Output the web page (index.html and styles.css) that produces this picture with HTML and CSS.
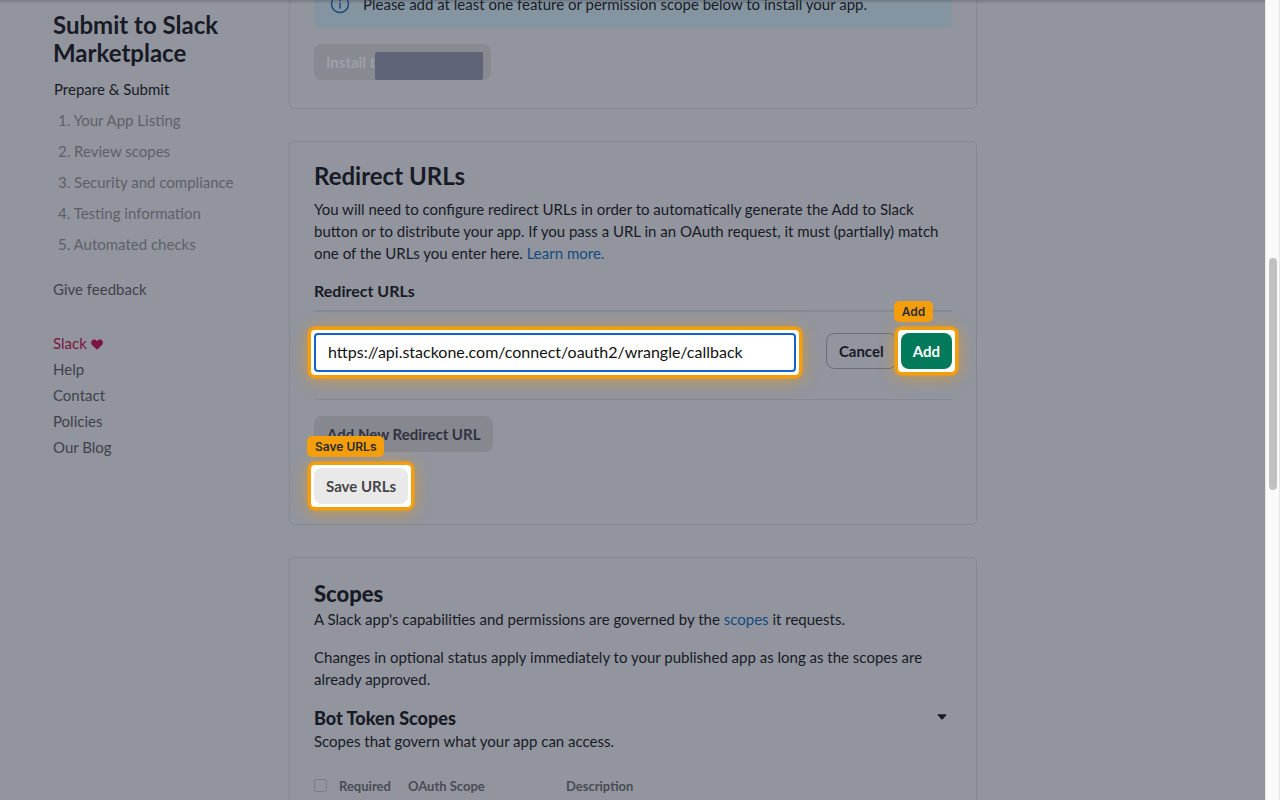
FILE: index.html
```html
<!DOCTYPE html>
<html lang="en">
<head>
<meta charset="utf-8">
<title>OAuth &amp; Permissions</title>
<link rel="stylesheet" href="styles.css">
</head>
<body>
<div class="page">
  <nav class="sidebar">
    <h2 class="sidebar-title">Submit to Slack Marketplace</h2>
    <a class="step-current" href="#">Prepare &amp; Submit</a>
    <ol class="steps">
      <li>1. Your App Listing</li>
      <li>2. Review scopes</li>
      <li>3. Security and compliance</li>
      <li>4. Testing information</li>
      <li>5. Automated checks</li>
    </ol>
    <a class="feedback" href="#">Give feedback</a>
    <ul class="links">
      <li><a class="brand" href="#">Slack <svg class="heart" viewBox="0 0 12 11" aria-hidden="true"><path d="M6 10.8 1 5.9C-.2 4.600-.1 2.300 1.100 1.200 2.500 0 4.800.2 6 2.200 7.200.2 9.500 0 10.900 1.200c1.200 1.100 1.300 3.400.1 4.700z"/></svg></a></li>
      <li><a href="#">Help</a></li>
      <li><a href="#">Contact</a></li>
      <li><a href="#">Policies</a></li>
      <li><a href="#">Our Blog</a></li>
    </ul>
  </nav>
  <main class="content">
    <section class="card card-install">
      <div class="alert">
        <svg class="info" viewBox="0 0 20 20" aria-hidden="true"><circle cx="10" cy="10" r="8.500"/><path d="M10 9v5"/><circle class="dot" cx="10" cy="6.300" r="1"/></svg>
        <span>Please add at least one feature or permission scope below to install your app.</span>
      </div>
      <button class="btn btn-disabled" disabled>Install t<span class="redaction"></span></button>
    </section>

    <section class="card card-urls">
      <h2 class="title">Redirect URLs</h2>
      <p class="text">You will need to configure redirect URLs in order to automatically generate the Add to Slack button or to distribute your app. If you pass a URL in an OAuth request, it must (partially) match one of the URLs you enter here. <a class="link" href="#">Learn more.</a></p>
      <label class="list-head" for="url">Redirect URLs</label>
      <div class="url-row">
        <div class="spot spot-input"><input class="url" id="url" type="text" value="https://api.stackone.com/connect/oauth2/wrangle/callback"></div>
        <div class="row-actions">
          <button class="btn btn-outline">Cancel</button>
          <div class="spot"><span class="tag">Add</span><button class="btn btn-primary">Add</button></div>
        </div>
      </div>
      <div class="stack">
        <button class="btn btn-muted">Add New Redirect URL</button>
        <div class="spot"><span class="tag">Save URLs</span><button class="btn btn-save">Save URLs</button></div>
      </div>
    </section>

    <section class="card card-scopes">
      <h2 class="title-heavy">Scopes</h2>
      <p class="text">A Slack app's capabilities and permissions are governed by the <a class="link" href="#">scopes</a> it requests.</p>
      <p class="text text-spaced">Changes in optional status apply immediately to your published app as long as the scopes are already approved.</p>
      <div class="subhead">
        <h3 class="subtitle">Bot Token Scopes</h3>
        <button class="toggle" aria-label="Collapse"><svg viewBox="0 0 10 6"><path d="M1.200.3h7.600q1 .2.4 1L5.700 5.300q-.7.700-1.400 0L.8 1.300Q.2.500 1.200.3z"/></svg></button>
      </div>
      <p class="text">Scopes that govern what your app can access.</p>
      <table class="scopes">
        <tr>
          <th class="col-required"><label class="check"><input type="checkbox">Required</label></th>
          <th class="col-scope">OAuth Scope</th>
          <th>Description</th>
        </tr>
      </table>
    </section>
  </main>
</div>
<div class="scroll-track"><div class="scroll-thumb"></div></div>
</body>
</html>
```
FILE: styles.css
```css
* { box-sizing: border-box; }
body {
  margin: 0;
  height: 100vh;
  display: flex;
  overflow: hidden;
  background: #92959e;
  color: #181b25;
  font: 15px/22px Lato, "Liberation Sans", sans-serif;
}
h2, h3, p, ol, ul { margin: 0; padding: 0; }
ol, ul { list-style: none; }
a { color: inherit; text-decoration: none; }
button, input { font: inherit; color: inherit; }

.page {
  flex: 1;
  min-width: 0;
  height: 100vh;
  overflow: hidden;
  display: grid;
  grid-template-columns: 204px minmax(0, 688px);
  column-gap: 32px;
  padding-left: 53px;
  position: relative;
}
.page::before {
  content: "";
  position: absolute;
  inset: 0 0 auto;
  height: 4px;
  z-index: 2;
  background: linear-gradient(rgba(70, 72, 82, .35), rgba(70, 72, 82, 0));
}

.sidebar { padding-top: 11px; color: #3f424c; }
.sidebar-title { font-size: 24px; line-height: 28px; font-weight: 700; color: #181b25; }
.step-current { display: block; margin-top: 7px; padding-left: 1px; line-height: 31px; color: #181b25; }
.steps { padding-left: 5px; line-height: 31px; color: #5e6069; }
.feedback { display: block; margin-top: 18px; }
.links { margin-top: 30px; line-height: 26px; }
.brand { color: #79153f; }
.heart { width: 12px; height: 11px; vertical-align: -1px; fill: currentColor; }

.content { display: flex; flex-direction: column; gap: 32px; }
.card { flex: none; border: 1px solid #858891; border-radius: 5px; padding: 0 24px; }

.card-install { margin-top: -42px; padding-top: 24px; padding-bottom: 28px; }
.alert { display: flex; gap: 13px; padding: 10px 16px 13px; border-radius: 8px; background: #8494a0; margin-bottom: 16px; }
.info { width: 20px; height: 20px; margin-top: 1px; fill: none; stroke: #1b4c7d; stroke-width: 1.500; stroke-linecap: round; }
.info .dot { fill: #1b4c7d; stroke: none; }

.btn { height: 36px; padding: 0 12px; border: 0; border-radius: 8px; font-weight: 700; white-space: nowrap; }
.btn-disabled { position: relative; display: block; min-width: 177px; text-align: left; background: #888a92; color: #9da0a9; }
.redaction { position: absolute; left: 61px; top: 8px; width: 108px; height: 28px; border-radius: 2px; background: #5e6377; }
.btn-outline { border: 1px solid #6b6e77; background: none; }
.btn-primary { display: block; background: #007a5a; color: #fff; }
.btn-muted { padding: 0 13px; background: #868890; color: #303340; }
.btn-save { display: block; background: #e9e9e9; color: #454547; }

.card-urls { padding-top: 19px; padding-bottom: 20px; }
.title { font-size: 24px; line-height: 30px; font-weight: 700; }
.text { margin-top: 7px; }
.link { color: #134b80; }
.list-head { display: block; margin-top: 16px; padding-bottom: 8px; border-bottom: 2px solid #868992; font-size: 16px; font-weight: 700; }
.url-row { display: flex; justify-content: space-between; gap: 30px; padding: 21px 0 27px; border-bottom: 1px solid #858891; }
.row-actions { display: flex; align-items: flex-start; gap: 4px; }
.stack { display: flex; flex-direction: column; align-items: flex-start; gap: 16px; padding-top: 16px; }

/* Highlight frame that surrounds the control being pointed at */
.spot {
  position: relative;
  margin: -6px;
  padding: 3px;
  border: 3px solid #f59e0b;
  border-radius: 7px;
  background: #fff;
  box-shadow: 0 0 0 1px rgba(245, 158, 11, .5), 0 2px 16px rgba(245, 158, 11, .6);
}
.spot-input { flex: 1; }
.tag {
  position: absolute;
  left: -4px;
  bottom: 100%;
  margin-bottom: 8px;
  padding: 0 8px;
  border-radius: 5px;
  background: #f59e0b;
  color: #2a2c33;
  font: 600 12px/21px Inter, "Liberation Sans", sans-serif;
  white-space: nowrap;
}
.url { display: block; width: 100%; height: 39px; padding: 0 12px 2px; border: 2px solid #1264c8; border-radius: 4px; background: #fff; color: #111; font-size: 16px; outline: 0; }

.card-scopes { padding-top: 21px; padding-bottom: 24px; }
.title-heavy { font-size: 22px; line-height: 30px; font-weight: 900; }
.card-scopes .text { margin-top: 0; }
.card-scopes .title-heavy + .text { margin-top: -1px; }
.card-scopes .text-spaced { margin: 16px 0; }
.subhead { display: flex; justify-content: space-between; align-items: center; padding-right: 5px; }
.subtitle { font-size: 18px; line-height: 24px; font-weight: 900; }
.toggle { display: block; padding: 0 0 2px; border: 0; background: none; line-height: 0; }
.toggle svg { width: 10px; height: 6px; fill: #181b25; }
.scopes { width: 100%; margin-top: 23px; border-spacing: 0; table-layout: fixed; color: #4a4c55; font-size: 13px; }
.scopes th { padding: 0; text-align: left; font-weight: 700; }
.col-required { width: 94px; }
.col-scope { width: 158px; }
.check { display: flex; align-items: center; gap: 12px; }
.check input { appearance: none; width: 13px; height: 13px; margin: 0 0 2px; border: 1px solid #7b7e87; border-radius: 2px; }

.scroll-track { flex: none; width: 15px; padding: 258px 3px 0; border: solid #e6e6e6; border-width: 0 1px; background: #fafafa; }
.scroll-thumb { width: 8px; height: 232px; border-radius: 4px; background: #c1c1c1; }
```
